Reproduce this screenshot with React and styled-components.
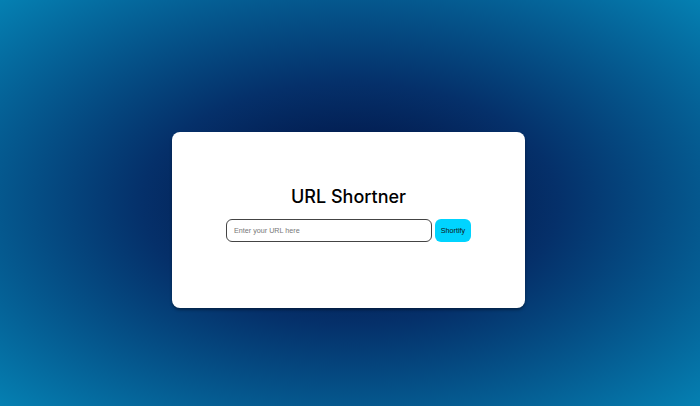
import React from "react";
import styled, { createGlobalStyle } from "styled-components";

const Global = createGlobalStyle`
  html, body { margin: 0; padding: 0; }
  body { font-family: "Liberation Sans", Arial, sans-serif; }
  #root { min-height: 100vh; }
`;

const Page = styled.main`
  min-height: 100vh;
  box-sizing: border-box;
  display: flex;
  justify-content: center;
  align-items: flex-start;
  padding: 132px 3px 0 0;
  background: radial-gradient(ellipse at 50% 50%, #000a38 0%, #05306a 42%, #0580b2 100%);
`;

const Card = styled.section`
  width: 353px;
  height: 176px;
  box-sizing: border-box;
  background: #ffffff;
  border-radius: 8px;
  box-shadow: 0 2px 3px rgba(0, 0, 0, 0.35);
  display: flex;
  flex-direction: column;
  align-items: center;
  padding-top: 53px;
  gap: 10px;
`;

const Title = styled.h1`
  margin: 0;
  font-family: Inter, "Noto Sans", sans-serif;
  font-weight: 500;
  font-size: 18px;
  line-height: 24px;
  color: #000;
`;

const Row = styled.form`
  display: flex;
  gap: 3px;
  margin: 0;
`;

const UrlInput = styled.input`
  width: 206px;
  height: 23px;
  box-sizing: border-box;
  border: 1px solid #444;
  border-radius: 6px;
  padding: 0 7px;
  font-family: "Liberation Sans", Arial, sans-serif;
  font-size: 7.2px;
  outline: none;
  &::placeholder { color: #777; }
`;

const Button = styled.button`
  width: 36px;
  height: 23px;
  border: none;
  border-radius: 6px;
  background: #00d4ff;
  color: #111;
  font-family: "Liberation Sans", Arial, sans-serif;
  font-size: 7.2px;
  padding: 0;
  cursor: pointer;
`;

export default function App() {
  return (
    <>
      <Global />
      <Page>
        <Card>
          <Title>URL Shortner</Title>
          <Row onSubmit={(e) => e.preventDefault()}>
            <UrlInput type="text" placeholder="Enter your URL here" />
            <Button type="submit">Shortify</Button>
          </Row>
        </Card>
      </Page>
    </>
  );
}
